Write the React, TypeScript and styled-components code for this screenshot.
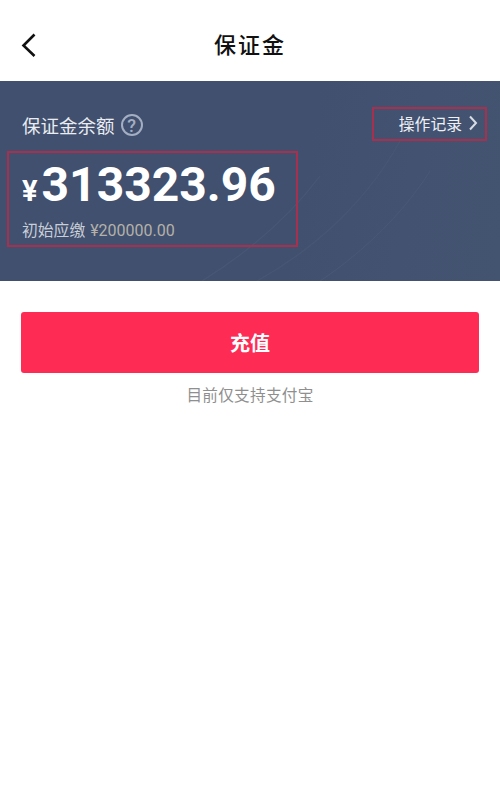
import React from "react";
import styled, { createGlobalStyle } from "styled-components";

const Global = createGlobalStyle`
  html, body { margin: 0; padding: 0; background: #fff; }
  body { font-family: Roboto, "Noto Sans CJK SC", sans-serif; }
  * { box-sizing: border-box; }
`;

const Page = styled.div`
  width: 500px;
  height: 797px;
  background: #fff;
  display: flex;
  flex-direction: column;
  overflow: hidden;
`;

const Header = styled.header`
  height: 81px;
  position: relative;
  display: flex;
  align-items: center;
  justify-content: center;
  padding-top: 5px;
`;

const BackIcon = styled.svg`
  position: absolute;
  left: 20px;
  top: 32px;
  width: 18px;
  height: 26px;
`;

const Title = styled.h1`
  margin: 0;
  font-family: "Noto Sans CJK SC", sans-serif;
  font-size: 22px;
  font-weight: 500;
  letter-spacing: 2px;
  color: #111;
  line-height: 30px;
`;

const Panel = styled.section`
  position: relative;
  height: 200px;
  background: linear-gradient(100deg, #40506e 0%, #41506f 60%, #435471 100%);
  display: flex;
  flex-direction: column;
  padding: 26px 13px 0 7px;
  overflow: hidden;
`;

const Waves = styled.svg`
  position: absolute;
  inset: 0;
  width: 100%;
  height: 100%;
`;

const TopRow = styled.div`
  position: relative;
  display: flex;
  align-items: center;
  justify-content: space-between;
  height: 34px;
`;

const BalanceLabel = styled.div`
  display: flex;
  align-items: center;
  gap: 6px;
  padding-left: 15px;
  margin-top: 2px;
  font-family: "Noto Sans CJK SC", sans-serif;
  font-size: 18.5px;
  color: #e9ecf1;
`;

const HelpIcon = styled.span`
  width: 22px;
  height: 22px;
  border-radius: 50%;
  border: 2px solid #a3aec2;
  color: #a3aec2;
  font-family: Roboto, sans-serif;
  font-size: 18px;
  font-weight: 500;
  display: flex;
  align-items: center;
  justify-content: center;
`;

const RecordLink = styled.a`
  width: 115px;
  height: 34px;
  border: 2px solid #a8304f;
  display: flex;
  align-items: center;
  justify-content: flex-end;
  gap: 6px;
  padding: 0 7px 2px 0;
  font-family: "Noto Sans CJK SC", sans-serif;
  font-size: 15.8px;
  color: #eef0f4;
`;

const Chevron = styled.svg`
  width: 10px;
  height: 16px;
`;

const AmountBox = styled.div`
  position: relative;
  margin-top: 10px;
  width: 291px;
  height: 96px;
  border: 2px solid #a8304f;
  padding: 4px 0 0 13px;
  display: flex;
  flex-direction: column;
`;

const Amount = styled.div`
  display: flex;
  align-items: baseline;
  color: #fff;
  font-weight: 700;
  line-height: 56px;
  height: 56px;
`;

const Currency = styled.span`
  font-size: 29px;
  margin-right: 4px;
`;

const Figure = styled.span`
  font-size: 48px;
`;

const Initial = styled.div`
  margin-top: 7px;
  display: flex;
  align-items: center;
  gap: 5px;
  line-height: 22px;
`;

const InitialLabel = styled.span`
  font-family: "Noto Sans CJK SC", sans-serif;
  font-size: 15.8px;
  color: #c9ced8;
  position: relative;
  top: -1px;
`;

const InitialValue = styled.span`
  font-size: 16px;
  color: #b5b1a9;
`;

const Body = styled.div`
  padding: 31px 21px 0;
  display: flex;
  flex-direction: column;
  align-items: center;
`;

const ChargeButton = styled.button`
  width: 100%;
  height: 61px;
  border: 0;
  border-radius: 3px;
  background: #fe2c55;
  color: #fff;
  font-family: "Noto Sans CJK SC", sans-serif;
  font-size: 20px;
  font-weight: 700;
`;

const Note = styled.p`
  margin: 10px 0 0;
  font-family: "Noto Sans CJK SC", sans-serif;
  font-size: 15.6px;
  line-height: 22px;
  letter-spacing: 0.3px;
  color: #8f8f8f;
`;

export default function App() {
  return (
    <Page>
      <Global />
      <Header>
        <BackIcon viewBox="0 0 18 26" fill="none">
          <path d="M14.5 2.5 3.5 13.5l11 10.5" stroke="#111" strokeWidth="2.6" />
        </BackIcon>
        <Title>保证金</Title>
      </Header>
      <Panel>
        <Waves viewBox="0 0 500 200" fill="none">
          <path d="M202 200C250 170 290 135 320 95" stroke="#475774" strokeWidth="1.2" />
          <path d="M257 200C320 165 370 115 400 60" stroke="#465673" strokeWidth="1.2" />
          <path d="M320 200C365 170 405 130 430 90" stroke="#485977" strokeWidth="1" />
        </Waves>
        <TopRow>
          <BalanceLabel>
            保证金余额
            <HelpIcon>?</HelpIcon>
          </BalanceLabel>
          <RecordLink>
            操作记录
            <Chevron viewBox="0 0 10 16" fill="none">
              <path d="M2 1.5 8 8l-6 6.5" stroke="#d8dce4" strokeWidth="2" />
            </Chevron>
          </RecordLink>
        </TopRow>
        <AmountBox>
          <Amount>
            <Currency>¥</Currency>
            <Figure>313323.96</Figure>
          </Amount>
          <Initial>
            <InitialLabel>初始应缴</InitialLabel>
            <InitialValue>¥200000.00</InitialValue>
          </Initial>
        </AmountBox>
      </Panel>
      <Body>
        <ChargeButton>充值</ChargeButton>
        <Note>目前仅支持支付宝</Note>
      </Body>
    </Page>
  );
}
